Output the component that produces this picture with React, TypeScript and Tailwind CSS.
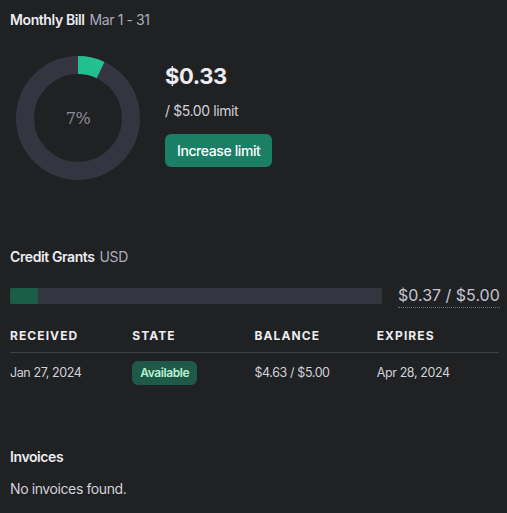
const grants = [
  { received: 'Jan 27, 2024', state: 'Available', balance: '$4.63 / $5.00', expires: 'Apr 28, 2024' },
];

function Donut({ percent }: { percent: number }) {
  const r = 53;
  const c = 2 * Math.PI * r;
  return (
    <svg width="128" height="128" viewBox="0 0 128 128" className="shrink-0">
      <defs>
        <linearGradient id="g" x1="0" y1="0" x2="1" y2="1">
          <stop offset="0%" stopColor="#0f9c7a" />
          <stop offset="100%" stopColor="#28c994" />
        </linearGradient>
      </defs>
      <circle cx="64" cy="64" r={r} fill="none" stroke="#343541" strokeWidth="18" />
      <circle
        cx="64"
        cy="64"
        r={r}
        fill="none"
        stroke="url(#g)"
        strokeWidth="18"
        strokeDasharray={`${(c * percent) / 100} ${c}`}
        transform="rotate(-90 64 64)"
      />
      <text
        x="64"
        y="70"
        textAnchor="middle"
        fontSize="16"
        fill="#8e8ea0"
        fontFamily="'DejaVu Serif', 'Liberation Serif', serif"
      >
        {percent}%
      </text>
    </svg>
  );
}

export default function App() {
  return (
    <div className="min-h-screen bg-[#202123] font-['Inter',sans-serif] tracking-tight text-[#ececf1] pl-[10px] pr-2 pt-[10px]">
      <div className="flex items-center gap-[5px] text-sm leading-5">
        <span className="font-semibold">Monthly Bill</span>
        <span className="text-[#acacbe]">Mar 1 - 31</span>
      </div>

      <div className="flex mt-6 ml-1 gap-[23px]">
        <Donut percent={7} />
        <div className="pt-2 flex flex-col items-start">
          <div className="text-[22px] leading-7 font-bold">$0.33</div>
          <div className="mt-[11px] text-sm leading-5 text-[#d1d1db]">/ $5.00 limit</div>
          <button className="mt-[13px] h-[33px] px-3 rounded-md bg-[#1a7f64] text-sm font-medium text-white">
            Increase limit
          </button>
        </div>
      </div>

      <div className="mt-[65px] flex items-center gap-[5px] text-sm leading-5">
        <span className="font-semibold">Credit Grants</span>
        <span className="text-[#acacbe]">USD</span>
      </div>

      <div className="mt-4 flex items-center gap-4">
        <div className="w-[372px] shrink-0 h-4 rounded-[2px] bg-[#343541] overflow-hidden">
          <div className="h-full w-[28px] bg-[#1b5e48]" />
        </div>
        <span className="whitespace-nowrap text-base leading-6 tracking-normal text-[#c5c5d2] border-b border-dotted border-[#6e6e80]">
          $0.37 / $5.00
        </span>
      </div>

      <div className="mt-5 w-[489px]">
        <div className="grid grid-cols-4 pb-2 border-b border-[#3e3f4b] text-xs leading-4 font-bold tracking-[0.09em]">
          <span>RECEIVED</span>
          <span>STATE</span>
          <span>BALANCE</span>
          <span>EXPIRES</span>
        </div>
        {grants.map((g) => (
          <div key={g.received} className="grid grid-cols-4 items-center pt-2 text-[12.5px] text-[#d1d1db]">
            <span>{g.received}</span>
            <span>
              <span className="inline-flex items-center h-6 px-2 rounded-md bg-[#1e5a47] text-xs font-semibold text-[#b9f0d2]">
                {g.state}
              </span>
            </span>
            <span>{g.balance}</span>
            <span>{g.expires}</span>
          </div>
        ))}
      </div>

      <div className="mt-[62px] text-sm leading-5 font-semibold">Invoices</div>
      <div className="mt-3 text-sm leading-5 text-[#d1d1db]">No invoices found.</div>
    </div>
  );
}
